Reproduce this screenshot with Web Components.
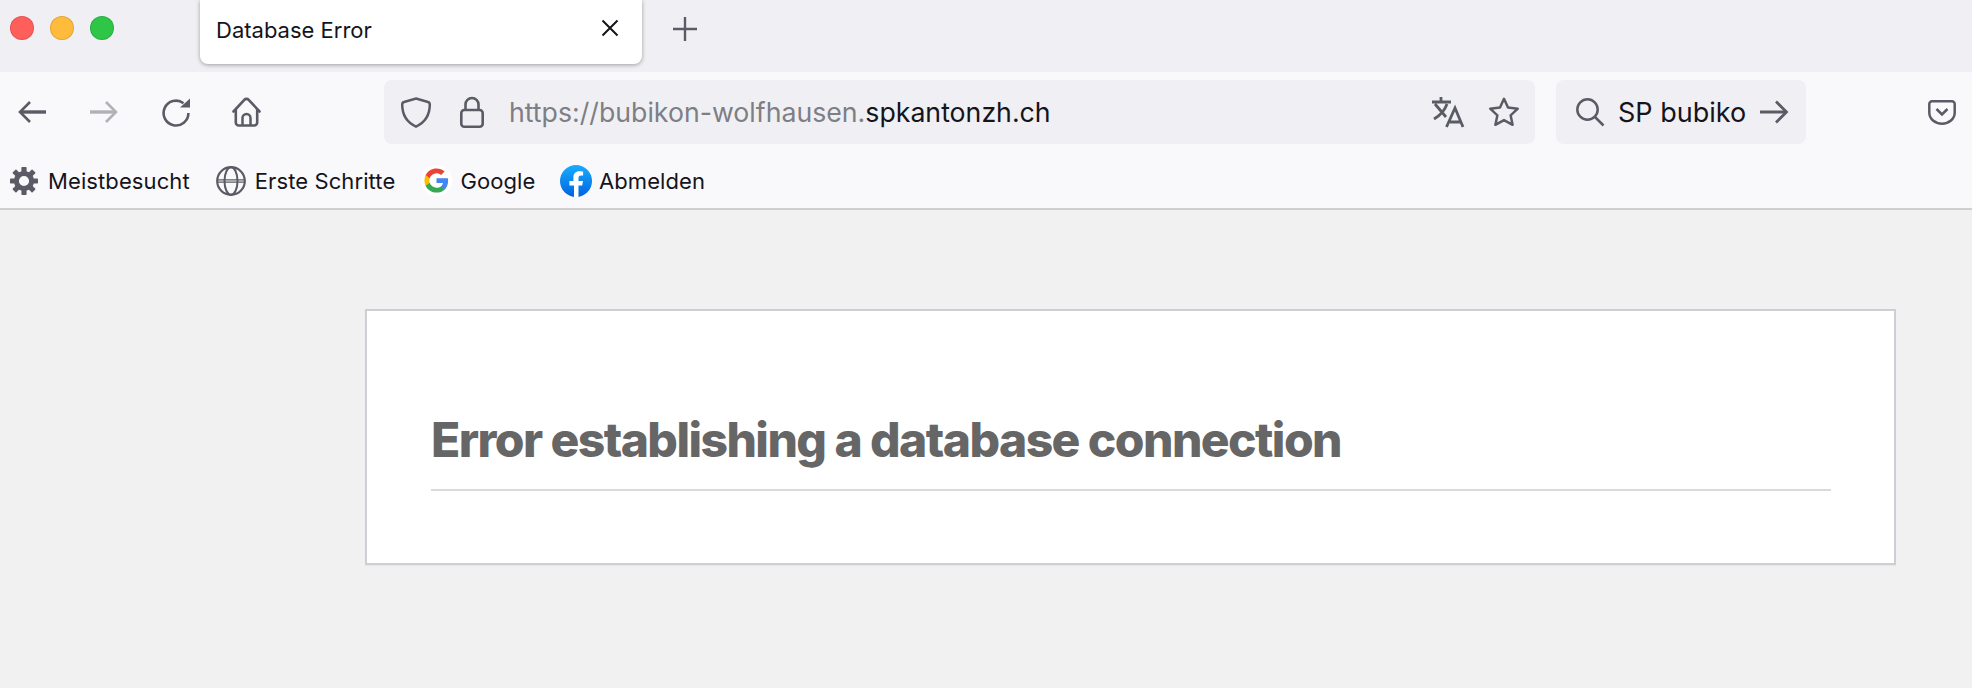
<!DOCTYPE html>
<html lang="de">
<head>
<meta charset="utf-8">
<title>Database Error</title>
<style>
  html, body { margin: 0; height: 100%; background: #f1f1f1; }
  body { font-family: Inter, "Liberation Sans", sans-serif; color: #15141a; overflow: hidden; }
</style>
</head>
<body>
<browser-tabs title-text="Database Error"></browser-tabs>
<nav-toolbar>
  <span slot="host-dim">https://bubikon-wolfhausen.</span><span slot="host">spkantonzh.ch</span>
  <span slot="search">SP bubiko</span>
</nav-toolbar>
<bookmark-bar>
  <bookmark-item icon="gear" gap="10">Meistbesucht</bookmark-item>
  <bookmark-item icon="globe" gap="9">Erste Schritte</bookmark-item>
  <bookmark-item icon="google" gap="8">Google</bookmark-item>
  <bookmark-item icon="facebook" gap="7" style="margin-left: -1.500px">Abmelden</bookmark-item>
</bookmark-bar>
<error-page>Error establishing a database connection</error-page>

<script>
// every icon is [width, height, svg body], sizes are the on-screen pixels
const ICONS = {
  back: [28, 24, '<path d="M28 12H3" stroke-width="3.4"/><path d="M12 2 2 12l10 10" stroke-width="2.6"/>'],
  forward: [28, 24, '<g opacity=".45"><path d="M0 12h25" stroke-width="3.4"/><path d="m16 2 10 10-10 10" stroke-width="2.6"/></g>'],
  reload: [28, 28, '<path d="M21.5 5.2A12.4 12.4 0 1 0 26.4 15" stroke-width="2.6"/><path d="M18 9.5 28 .5v9z" fill="#5b5b66" stroke="none"/>'],
  home: [29, 30, '<path d="M1.500 14.500 12.300 2.800a3 3 0 0 1 4.400 0L27.500 14.500" stroke-width="2.600" stroke-linecap="round"/><path d="M3.800 12v13.500a3 3 0 0 0 3 3h15.400a3 3 0 0 0 3-3V12" stroke-width="2.600"/><path d="M10.500 28v-7a4 4 0 0 1 8 0v7" stroke-width="2.500"/>'],
  shield: [30, 31, '<path d="M15 1.500 27 5c1.500.4 1.800 1.400 1.800 2.600 0 10-5 18-13.800 22C6.200 25.600 1.200 17.600 1.200 7.600c0-1.200.3-2.200 1.800-2.600z" stroke-width="2.500"/>'],
  lock: [24, 31, '<rect x="1.300" y="13" width="21.400" height="16.700" rx="3" stroke-width="2.600"/><path d="M5.500 13V7.500a6.500 6.500 0 0 1 13 0V13" stroke-width="2.600"/>'],
  translate: [32, 30, '<path d="M0 5h19M9 0v5M3 7l11 13M15 7C12.500 14 8 18.500 2 22" stroke-width="2.800"/><path d="M14.500 30 23 11l8 19M18 25h10" stroke-width="2.800"/>'],
  star: [32, 30, '<path d="M16 1.800 20 10.500l9.800 1.200-7.200 6.600 2 9.500L16 23.100 7.400 27.800l2-9.500L2.200 11.700 12 10.500z" stroke-width="2.500" stroke-linejoin="round"/>'],
  search: [28, 28, '<circle cx="11.500" cy="11.500" r="10.200" stroke-width="2.500"/><path d="m19 19 8.500 8.500" stroke-width="2.500"/>'],
  go: [28, 24, '<path d="M0 12h25" stroke-width="3"/><path d="m16 1.500 10.500 10.500L16 22.500" stroke-width="2.800"/>'],
  pocket: [28, 25, '<path d="M4 1.300h20a2.700 2.700 0 0 1 2.700 2.700v8.500C26.700 19 21 23.700 14 23.700S1.300 19 1.300 12.500V4A2.700 2.700 0 0 1 4 1.300z" stroke-width="2.500"/><path d="m8.500 9 5.500 5.500L19.500 9" stroke-width="2.500"/>'],
  close: [18, 18, '<path d="m1.500 1.500 15 15M16.500 1.500l-15 15" stroke="#15141a" stroke-width="2"/>'],
  plus: [24, 24, '<path d="M12 0v24M0 12h24" stroke-width="2.400"/>'],
  gear: [28, 28, '<circle cx="14" cy="14" r="7.600" stroke-width="5"/>' +
    [0, 45, 90, 135, 180, 225, 270, 315].map(a => `<rect x="11.400" y="0" width="5.200" height="6" rx=".8" fill="#5b5b66" stroke="none" transform="rotate(${a} 14 14)"/>`).join('')],
  globe: [30, 30, '<circle cx="15" cy="15" r="13.800" stroke-width="2.200"/><ellipse cx="15" cy="15" rx="6.500" ry="13.800" stroke-width="2"/><path d="M1.500 13.800h27M1.500 16.200h27" stroke-width="1.200"/>'],
  google: [31, 31, '<circle cx="15.500" cy="15.500" r="15.500" fill="#fff" stroke="none"/><g transform="translate(2.300 2.300) scale(.55)" stroke="none"><path fill="#4285F4" d="M45.120 24.500c0-1.560-.14-3.060-.4-4.500H24v8.510h11.840c-.51 2.750-2.060 5.080-4.390 6.640v5.520h7.110c4.160-3.830 6.560-9.470 6.560-16.170z"/><path fill="#34A853" d="M24 46c5.940 0 10.920-1.970 14.560-5.330l-7.110-5.520c-1.970 1.320-4.490 2.100-7.450 2.100-5.730 0-10.580-3.870-12.310-9.070H4.340v5.700C7.960 41.070 15.400 46 24 46z"/><path fill="#FBBC05" d="M11.690 28.180C11.250 26.860 11 25.450 11 24s.25-2.860.69-4.180v-5.700H4.340C2.850 17.090 2 20.450 2 24c0 3.550.85 6.910 2.340 9.880l7.350-5.700z"/><path fill="#EA4335" d="M24 10.750c3.230 0 6.130 1.110 8.410 3.290l6.310-6.310C34.910 4.180 29.930 2 24 2 15.400 2 7.960 6.930 4.340 14.120l7.350 5.700c1.730-5.200 6.580-9.070 12.310-9.070z"/></g>'],
  facebook: [32, 32, '<defs><linearGradient id="fb" x1="0" y1="0" x2="0" y2="1"><stop offset="0" stop-color="#18acfe"/><stop offset="1" stop-color="#0163e0"/></linearGradient></defs><circle cx="16" cy="16" r="16" fill="url(#fb)" stroke="none"/><path fill="#fff" stroke="none" d="M22.200 20.600 23 16h-4.500v-3c0-1.300.6-2.500 2.600-2.500h2V6.500s-1.800-.3-3.600-.3c-3.700 0-6.100 2.200-6.100 6.300V16H9.400v4.600h4.600V32h4.500V20.600z"/>']
};

class NavIcon extends HTMLElement {
  constructor() {
    super();
    this.attachShadow({ mode: 'open' });
  }
  connectedCallback() {
    const [w, h, body] = ICONS[this.getAttribute('name')];
    this.shadowRoot.innerHTML = `
      <style>
        :host { display: block; flex: none; line-height: 0; }
        svg { display: block; overflow: visible; fill: none; stroke: #5b5b66; }
      </style>
      <svg width="${w}" height="${h}" viewBox="0 0 ${w} ${h}">${body}</svg>`;
  }
}

class BrowserTabs extends HTMLElement {
  constructor() {
    super();
    this.attachShadow({ mode: 'open' });
  }
  connectedCallback() {
    this.shadowRoot.innerHTML = `
      <style>
        :host { display: flex; height: 72px; background: #f0f0f4; position: relative; z-index: 1; }
        .lights { display: flex; gap: 16px; padding: 16px 0 0 10px; width: 200px; box-sizing: border-box; }
        .lights i { width: 24px; height: 24px; border-radius: 50%; box-shadow: inset 0 0 0 1px rgba(0, 0, 0, .12); }
        .red { background: #ff5f5b; } .yellow { background: #ffbb3c; } .green { background: #2fc648; }
        .tab {
          width: 442px; height: 64px; box-sizing: border-box; padding: 0 23px 4px 16px;
          display: flex; align-items: center; justify-content: space-between;
          background: #fff; border-radius: 0 0 8px 8px;
          box-shadow: 0 1px 4px rgba(0, 0, 0, .35);
          font-size: 22px;
        }
        .tab nav-icon { margin-top: -4px; }
        .new { margin: 17px 0 0 31px; }
      </style>
      <div class="lights"><i class="red"></i><i class="yellow"></i><i class="green"></i></div>
      <div class="tab"><span>${this.getAttribute('title-text')}</span><nav-icon name="close"></nav-icon></div>
      <nav-icon class="new" name="plus"></nav-icon>`;
  }
}

class NavToolbar extends HTMLElement {
  constructor() {
    super();
    this.attachShadow({ mode: 'open' });
  }
  connectedCallback() {
    this.shadowRoot.innerHTML = `
      <style>
        :host { display: flex; align-items: flex-start; height: 84px; box-sizing: border-box; padding: 8px 16px 0 18px; background: #f9f9fb; }
        .buttons { display: flex; align-items: center; height: 64px; }
        .buttons nav-icon + nav-icon { margin-left: 44px; }
        .buttons nav-icon[name="home"] { margin-left: 42px; }
        .field { display: flex; align-items: center; height: 64px; box-sizing: border-box; background: #f0f0f4; border-radius: 8px; }
        .url { width: 1151px; margin-left: 123px; padding: 0 15px 0 17px; }
        .text { flex: 1; margin-left: 25px; font-size: 26.700px; white-space: nowrap; color: #15141a; }
        .dim { color: #7e7e85; }
        .lock { margin-left: 29px; }
        .star { margin-left: 24px; }
        .search { width: 250px; margin-left: 21px; padding: 0 18px 0 20px; box-sizing: border-box; font-size: 27px; }
        .search span { flex: 1; margin-left: 14px; white-space: nowrap; }
        .pocket { margin: 20px 0 0 auto; }
      </style>
      <div class="buttons">
        <nav-icon name="back"></nav-icon>
        <nav-icon name="forward"></nav-icon>
        <nav-icon name="reload"></nav-icon>
        <nav-icon name="home"></nav-icon>
      </div>
      <div class="field url">
        <nav-icon name="shield"></nav-icon>
        <nav-icon class="lock" name="lock"></nav-icon>
        <div class="text"><span class="dim"><slot name="host-dim"></slot></span><slot name="host"></slot></div>
        <nav-icon name="translate"></nav-icon>
        <nav-icon class="star" name="star"></nav-icon>
      </div>
      <div class="field search">
        <nav-icon name="search"></nav-icon>
        <span><slot name="search"></slot></span>
        <nav-icon name="go"></nav-icon>
      </div>
      <nav-icon class="pocket" name="pocket"></nav-icon>`;
  }
}

class BookmarkBar extends HTMLElement {
  constructor() {
    super();
    this.attachShadow({ mode: 'open' });
  }
  connectedCallback() {
    this.shadowRoot.innerHTML = `
      <style>
        :host { display: flex; align-items: center; gap: 26px; height: 54px; box-sizing: border-box; padding: 0 0 3px 10px; background: #f9f9fb; border-bottom: 2px solid #cfcfd3; }
      </style>
      <slot></slot>`;
  }
}

class BookmarkItem extends HTMLElement {
  constructor() {
    super();
    this.attachShadow({ mode: 'open' });
  }
  connectedCallback() {
    this.shadowRoot.innerHTML = `
      <style>
        :host { display: flex; align-items: center; gap: ${this.getAttribute('gap')}px; font-size: 22px; white-space: nowrap; letter-spacing: .1px; }
      </style>
      <nav-icon name="${this.getAttribute('icon')}"></nav-icon>
      <slot></slot>`;
  }
}

class ErrorPage extends HTMLElement {
  constructor() {
    super();
    this.attachShadow({ mode: 'open' });
  }
  connectedCallback() {
    this.shadowRoot.innerHTML = `
      <style>
        :host { display: block; padding: 99px 76px 0 365px; }
        .card { background: #fff; border: 2px solid #ccd0d4; box-shadow: 0 1px 1px rgba(0, 0, 0, .04); padding: 0 63px 0 64px; height: 256px; box-sizing: border-box; }
        h1 { margin: 0; padding-top: 101px; height: 77px; box-sizing: content-box; font-size: 48px; line-height: 56px; font-weight: 800; letter-spacing: -1.560px; color: #666; border-bottom: 2px solid #dadada; white-space: nowrap; }
      </style>
      <div class="card"><h1><slot></slot></h1></div>`;
  }
}

customElements.define('nav-icon', NavIcon);
customElements.define('browser-tabs', BrowserTabs);
customElements.define('nav-toolbar', NavToolbar);
customElements.define('bookmark-bar', BookmarkBar);
customElements.define('bookmark-item', BookmarkItem);
customElements.define('error-page', ErrorPage);
</script>
</body>
</html>
